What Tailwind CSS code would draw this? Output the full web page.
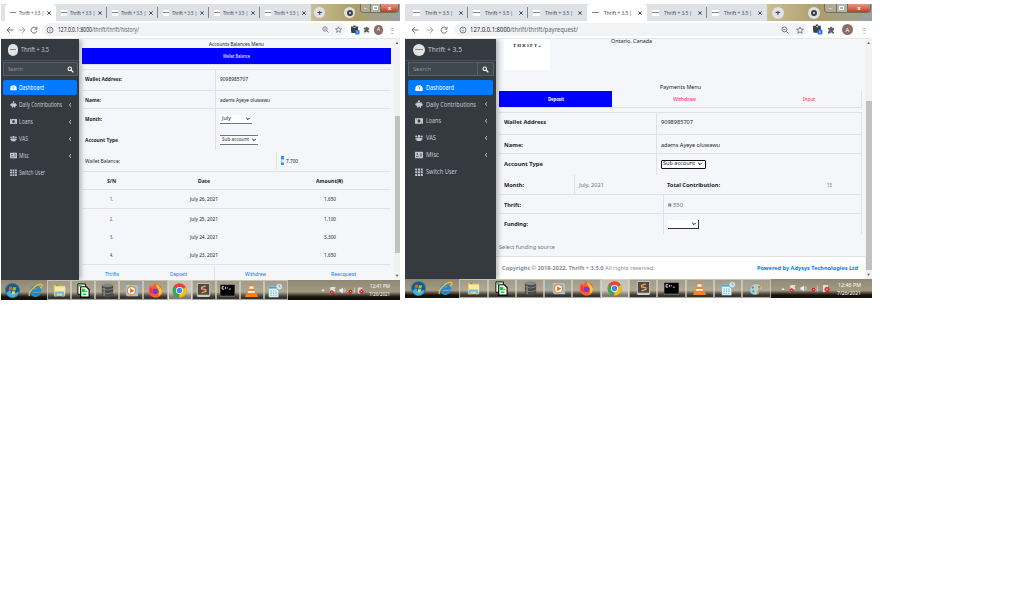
<!DOCTYPE html>
<html lang="en">
<head>
<meta charset="utf-8">
<title>Thrift + 3.5</title>
<script src="https://cdn.jsdelivr.net/npm/@tailwindcss/browser@4"></script>
</head>
<body class="bg-white w-[1024px] h-[601px] overflow-hidden font-['Noto_Sans','Open_Sans',sans-serif] text-[6px] leading-none text-[#212529]">
<svg class="hidden">
  <defs>
    <symbol id="i-back" viewBox="0 0 8 8"><path d="M7.5 4H1M4 1 1 4l3 3" fill="none" stroke="currentColor" stroke-width=".9"/></symbol>
    <symbol id="i-fwd" viewBox="0 0 8 8"><path d="M.5 4H7M4 1l3 3-3 3" fill="none" stroke="currentColor" stroke-width=".9"/></symbol>
    <symbol id="i-reload" viewBox="0 0 8 8"><path d="M6.6 2.4A3 3 0 1 0 7 5M7 .8v2.4H4.6" fill="none" stroke="currentColor" stroke-width=".9"/></symbol>
    <symbol id="i-info" viewBox="0 0 8 8"><circle cx="4" cy="4" r="3" fill="none" stroke="currentColor" stroke-width=".8"/><path d="M4 3.6v2M4 2v.8" stroke="currentColor" stroke-width=".8"/></symbol>
    <symbol id="i-zoom" viewBox="0 0 8 8"><circle cx="3.4" cy="3.4" r="2.5" fill="none" stroke="currentColor" stroke-width=".8"/><path d="m5.3 5.3 2.2 2.2M2.4 3.4h2" stroke="currentColor" stroke-width=".8"/></symbol>
    <symbol id="i-star" viewBox="0 0 8 8"><path d="m4 .9 1 2.2 2.4.2-1.8 1.6.5 2.4L4 6 1.900 7.300l.5-2.400L.6 3.300 3 3.100z" fill="none" stroke="currentColor" stroke-width=".8"/></symbol>
    <symbol id="i-ext" viewBox="0 0 10 10"><path d="M1 1.500h2.500V.5h2v1H8V8H1.500L1 6z" fill="#3c4043"/><path d="M3.500 2.500h2" stroke="#fff" stroke-width=".7"/><rect x="5" y="5" width="4.500" height="4.500" rx="1" fill="#1a73e8"/><path d="M7.200 6v2.500" stroke="#fff" stroke-width=".7"/></symbol>
    <symbol id="i-puzzle" viewBox="0 0 8 8"><path d="M1 2h2a1.200 1.200 0 0 1 2.400 0H7v2a1 1 0 0 0 0 2v1.500H5.200a1 1 0 0 0-2 0H1V5.600a1 1 0 0 0 0-2z" fill="#5f6368"/></symbol>
    <symbol id="i-search" viewBox="0 0 8 8"><circle cx="3.200" cy="3.200" r="2" fill="none" stroke="#fff" stroke-width="1.200"/><path d="m4.800 4.800 2.500 2.500" stroke="#fff" stroke-width="1.400"/></symbol>
    <symbol id="n-dash" viewBox="0 0 8 8"><path d="M.3 7V5A3.700 3.700 0 0 1 7.700 5v2z" fill="#fff"/><path d="M4 5.500 5 3M2 4h.7M3 2.600h.6" stroke="#007bff" stroke-width=".7"/></symbol>
    <symbol id="n-pig" viewBox="0 0 8 8"><circle cx="4" cy="1.200" r="1" fill="#c2c7d0"/><path d="M1 3.500 2 2.500h3.500L6.500 2v1.200l1.200.8v1.500l-1 .3-.7 1V7.700H5V6.700H3.300v1H2.200V6.500L1.200 5.500.3 5V3.700z" fill="#c2c7d0"/></symbol>
    <symbol id="n-bill" viewBox="0 0 8 8"><path d="M0 1.200h8v5.600H0z" fill="#c2c7d0"/><ellipse cx="4" cy="4" rx="1.400" ry="1.800" fill="#343a40"/><path d="M1 2.200h.8M6.200 5.800H7" stroke="#343a40" stroke-width=".6"/></symbol>
    <symbol id="n-users" viewBox="0 0 8 8"><circle cx="4" cy="2.400" r="1.400" fill="#c2c7d0"/><circle cx="1.200" cy="2.600" r="1" fill="#c2c7d0"/><circle cx="6.800" cy="2.600" r="1" fill="#c2c7d0"/><path d="M0 5.300q0-1.200 2-1.200h4q2 0 2 1.200H6.500V7h-5V5.300z" fill="#c2c7d0"/></symbol>
    <symbol id="n-card" viewBox="0 0 8 8"><rect y=".8" width="8" height="6.400" rx=".6" fill="#c2c7d0"/><circle cx="2.300" cy="3" r=".8" fill="#343a40"/><path d="M1 5.500h2.700M4.800 3H7M4.800 4.800H7" stroke="#343a40" stroke-width=".7"/></symbol>
    <symbol id="n-grid" viewBox="0 0 8 8"><path d="M.2.5h2v2h-2zM3 .5h2v2H3zM5.800.5h2v2h-2zM.2 3.200h2v2h-2zM3 3.200h2v2H3zM5.800 3.200h2v2h-2zM.2 5.900h2v2h-2zM3 5.900h2v2H3zM5.800 5.900h2v2h-2z" fill="#c2c7d0"/></symbol>

    <symbol id="t-start" viewBox="0 0 16 16"><circle cx="8" cy="8" r="7.800" fill="#175a86"/><path d="M1.500 9a6.500 6.500 0 0 0 13 0Q8 13 1.500 9" fill="#39b5e0"/><circle cx="8" cy="8" r="7.500" fill="none" stroke="#4a86a8" stroke-width=".7"/><path d="M4.500 4.200q2-1 3.200 0L7 7.500q-1.500-.8-3.200 0z" fill="#e8602c"/><path d="M8.500 4.300q1.700 1 3.500 0l-.8 3.400q-1.700.8-3.300 0z" fill="#8fc540"/><path d="M3.600 8.300q1.600-.8 3.200 0L6 11.400q-1.500-.7-3 0z" fill="#3fa9f0"/><path d="M7.700 8.500q1.600.9 3.300 0l-.8 3.200q-1.600.8-3.200 0z" fill="#fdd13a"/></symbol>
    <symbol id="t-ie" viewBox="0 0 16 16"><path d="M12.500 10.500A4.700 4.700 0 1 1 12.700 8H4" fill="none" stroke="#1b8be0" stroke-width="2.600"/><path d="M1.500 14Q0 10 6 5t8.500-3.500Q16 3 13 5.500" fill="none" stroke="#f2c230" stroke-width="1.300"/></symbol>
    <symbol id="t-folder" viewBox="0 0 16 16"><path d="M2 2h5l1 1h6v11H2z" fill="#e9c765"/><path d="M3 4h11v8H3z" fill="#fbeaa2"/><path d="M4 2h3v1H4z" fill="#38b34a"/><path d="M3 14.500V10q0-1 1-1h8q1 0 1 1v4.500h-2.200V11.500H5.200v3z" fill="#6fbce8"/></symbol>
    <symbol id="t-doc" viewBox="0 0 16 16"><path d="M2 1h8v11H2z" fill="#fff" stroke="#000"/><path d="M5 4h6l3 3v8H5z" fill="#fff" stroke="#000" stroke-width="1.200"/><path d="M3 3h3M7 7h2v2H7zM10 9h2M7 12h4" stroke="#12d430" stroke-width="1.600"/></symbol>
    <symbol id="t-db" viewBox="0 0 16 16"><path d="M2 2v11.500q6 4 12 0V2z" fill="#4a4a4a"/><ellipse cx="8" cy="2.400" rx="6" ry="2" fill="#858585"/><path d="M2 6q6 3 12 0M2 10q6 3 12 0" fill="none" stroke="#999" stroke-width=".7"/><path d="M4.500 5v9" stroke="#808080" stroke-width="1.800"/></symbol>
    <symbol id="t-wmp" viewBox="0 0 16 16"><path d="M2 2h11l2 1v11H4l-2-1z" fill="#8fc8ea"/><circle cx="8" cy="8.200" r="5" fill="#f08325"/><circle cx="8" cy="8.200" r="3.800" fill="#fff"/><path d="M6.500 5.500v5.400L11 8.200z" fill="#f06a10"/></symbol>
    <symbol id="t-ff" viewBox="0 0 16 16"><path d="M1 7q0-3 2-5 .5 1.500 1.500 2Q6 1 9 0q0 2 2 3l1 1 .5-2Q15 5 15 8.500A7 7 0 0 1 1 9z" fill="#ff5a28"/><path d="M9 0q0 2 2 3 3 2 4 5.500-.5 4-4 5.500 2-5-1-8.500Q8 3 9 0" fill="#ffc72e"/><path d="M2 4q1 2 3 2.500L4 9l3 2Q4 12 2 10z" fill="#ff2d55"/><circle cx="8" cy="8.800" r="3" fill="#8136c9"/></symbol>
    <symbol id="t-chrome" viewBox="0 0 16 16"><circle cx="8" cy="8" r="7.500" fill="#34a853"/><path d="M8 8 1.600 4A7.500 7.500 0 0 1 14.700 4.600H8z" fill="#ea4335"/><path d="M8 8l6.700-3.400A7.500 7.500 0 0 1 7.600 15.500z" fill="#fbbc05"/><circle cx="8" cy="8" r="3.700" fill="#fff"/><circle cx="8" cy="8" r="2.900" fill="#4285f4"/></symbol>
    <symbol id="t-sub" viewBox="0 0 16 16"><rect x="1" y="0" width="14" height="15" rx="1.500" fill="#c9c9c9"/><rect x="2" y="1" width="12" height="11.500" fill="#484848"/><path d="M10.500 3 6 4.500v1.700l4.500 1v1.800L5.800 10.500" fill="none" stroke="#ff9d2f" stroke-width="1.500"/></symbol>
    <symbol id="t-cmd" viewBox="0 0 16 16"><path d="M0 1.500h16v12.500H0z" fill="#000" stroke="#b4b4b4" stroke-width=".6"/><path d="M4.500 4H2.200v2.500h2.300M6 4v2.500M7.500 5.200h1M9.500 6.500h2" fill="none" stroke="#fff" stroke-width=".9"/></symbol>
    <symbol id="t-vlc" viewBox="0 0 16 16"><path d="M2.500 11h11L15 15H1z" fill="#f58220"/><path d="M7 .5h2L12.500 12q-4.500 2-9 0z" fill="#f58220"/><path d="m6.200 3.500h3.600l.8 2.500H5.400zM4.700 8.500h6.600l.6 2H4.100z" fill="#f4f4f4"/></symbol>
    <symbol id="t-cal" viewBox="0 0 16 16"><path d="M1 4h10v11H1z" fill="#f3fbff" stroke="#8cc4d8" stroke-width=".6"/><path d="M1 4h10v2H1z" fill="#48a9c4"/><path d="M2.500 8.500h7M2.500 10.800h7M2.500 13h7" stroke="#55b3cd" stroke-width="1.200" stroke-dasharray="1.600 1"/><circle cx="12" cy="4" r="3.500" fill="#dce6ea" stroke="#8a9ba3" stroke-width=".8"/><path d="M12 2v2.200h1.500" stroke="#48717f" stroke-width=".6" fill="none"/></symbol>
    <symbol id="t-paint" viewBox="0 0 16 16"><path d="M1 8Q3 2 9 3q6 1 5 5-1 2-3 1.500-2 .5-1 3-1 3-5 2Q0 13 1 8" fill="#a8d4ea" stroke="#5c9cc0" stroke-width=".6"/><circle cx="4" cy="7" r="1.200" fill="#e84a3a"/><circle cx="7.500" cy="5.500" r="1.200" fill="#f6cf36"/><circle cx="4.500" cy="11" r="1.200" fill="#3cae4a"/><circle cx="11" cy="6.500" r="1.200" fill="#3b66d4"/><path d="m9 14 5-13" stroke="#e89432" stroke-width="1.700"/></symbol>
    <symbol id="y-flag" viewBox="0 0 8 9"><path d="M1.500 1v8M2 1h5l-1 2 1 2H2" stroke="#eee" fill="#ddd" stroke-width=".8"/><circle cx="3" cy="6.500" r="2.200" fill="#d81e1e"/><path d="m2.200 5.700 1.600 1.600M3.800 5.700 2.200 7.300" stroke="#fff" stroke-width=".5"/></symbol>
    <symbol id="y-vol" viewBox="0 0 8 9"><path d="M.5 3.200H2L4.500 1v7L2 6H.5z" fill="#eee"/><path d="M5.500 3q1 1.500 0 3M6.500 2q2 2.500 0 5" fill="none" stroke="#eee" stroke-width=".6"/></symbol>
    <symbol id="y-net" viewBox="0 0 8 9"><path d="M3 8V6h1v2zM5 8V4h1v4zM7 8V1h1v7z" fill="#ccc"/><circle cx="3" cy="5.800" r="2.300" fill="#d81e1e"/><path d="m2.200 5 1.600 1.600M3.800 5 2.200 6.600" stroke="#fff" stroke-width=".5"/></symbol>
    <symbol id="y-plug" viewBox="0 0 8 9"><path d="M1 1h5v3L4 8H1z" fill="#ddd"/><circle cx="5" cy="5.500" r="2.500" fill="#d81e1e"/><path d="m4 4.500 2 2M6 4.500l-2 2" stroke="#fff" stroke-width=".7"/></symbol>
    <symbol id="c-down" viewBox="0 0 6 4"><path d="m1.200.8 1.800 1.800L4.800.8" fill="none" stroke="#000"/></symbol>
  </defs>
</svg>

<main class="flex items-start pt-1">

<!-- Accounts window -->
<section class="ml-px w-[399px] shrink-0">
  <header>
    <div class="flex h-[17px] bg-[#dee1e6]">
      <div class="flex pl-1" data-tabs="6" data-active="0" data-pitch="51" data-label="25"></div>
      <div class="flex flex-1 items-center bg-linear-to-r from-[#c9bf94] via-[#ad9d69] to-[#9aa1a0] pl-[3px]">
        <span class="flex size-[11px] items-center justify-center rounded-full bg-[#dee1e6] text-[9px] font-bold text-[#3c4043]">+</span>
        <span class="ml-[19px] flex size-[11px] items-center justify-center rounded-full bg-[#dee1e6]"><i class="size-[6px] rounded-full border-2 border-[#3c4043]"></i></span>
        <div class="ml-auto mr-px flex h-[9px] w-[39px] self-start overflow-hidden rounded-b-sm border border-t-0 border-[#6e7066] text-[6px] text-white">
          <span class="flex flex-1 items-center justify-center bg-[#b1aa92]">–</span>
          <span class="flex flex-1 items-center justify-center border-x border-[#6e7066] bg-[#b5b4a9]"><i class="h-1 w-[5px] border border-white"></i></span>
          <span class="flex w-[17px] items-center justify-center bg-linear-to-b from-[#dc9a85] to-[#c13a1c] font-bold">x</span>
        </div>
      </div>
    </div>
    <div class="flex h-[18px] items-center border-b border-[#e4e6ea] bg-white text-[#5f6368]">
      <svg class="ml-[5px] size-2"><use href="#i-back"/></svg>
      <svg class="ml-1 size-2 text-[#9aa0a6]"><use href="#i-fwd"/></svg>
      <svg class="ml-1 size-2"><use href="#i-reload"/></svg>
      <div class="ml-1 flex h-[13px] w-[304px] items-center rounded-full bg-[#f1f3f4] pl-1">
        <svg class="size-2"><use href="#i-info"/></svg>
        <span class="ml-1 text-[7px]" data-w="81"><b class="font-normal text-[#202124]">127.0.0.1:8000</b>/thrift/thrift/history/</span>
        <svg class="ml-auto size-[7px]"><use href="#i-zoom"/></svg>
        <svg class="ml-1.5 mr-1 size-[7px]"><use href="#i-star"/></svg>
      </div>
      <svg class="ml-1 size-[10px]"><use href="#i-ext"/></svg>
      <svg class="ml-[3px] size-[7px]"><use href="#i-puzzle"/></svg>
      <span class="ml-1 flex h-[10px] w-[9px] items-center justify-center rounded-full bg-[#8d6e63] text-[5px] text-white">A</span>
      <span class="ml-[5px] text-[8px]">⋮</span>
    </div>
  </header>

  <div class="flex h-[241px] overflow-hidden">
    <aside class="z-10 w-[78px] shrink-0 bg-[#343a40] text-[#c2c7d0] shadow-[2px_0_5px_rgba(0,0,0,0.3)]">
      <div class="flex h-[22px] items-center border-b border-[#4b545c] pl-[7px]">
        <span class="flex h-3 w-[10px] items-center justify-center rounded-full bg-[#e3e3e3]"><i class="h-px w-1.5 bg-[#888]"></i></span>
        <span class="ml-[3px] text-[7px]" data-w="28">Thrift + 3.5</span>
      </div>
      <div class="ml-0.5 mt-px flex h-[14px] w-[75px] border border-[#56606a] bg-[#3f474e]">
        <div class="flex w-[60px] items-center pl-[4px] text-[#8e959c]"><span data-w="15">Search</span></div>
        <div class="flex flex-1 items-center justify-center"><svg class="size-[7px]"><use href="#i-search"/></svg></div>
      </div>
      <nav class="mt-1 pl-0.5 pr-[2px]" data-nav="left"></nav>
    </aside>

    <div class="w-[315px] shrink-0 bg-[#f4f6f9] pl-[3px] pr-[3px]">
      <div class="flex h-[9px] items-center justify-center"><span data-w="55">Accounts Balances Menu</span></div>
      <div class="flex h-4 items-center justify-center bg-[#0000ff] text-[5px] text-white"><span data-w="27">Wallet Balance</span></div>
      <div class="mb-1 h-px bg-[#dee2e6]"></div>
      <div class="flex h-[22px] border-y border-[#dee2e6]">
        <div class="flex w-[134px] items-center border-r border-[#dee2e6] pb-[3px] pl-[3px] font-bold"><span data-w="37">Wallet Address:</span></div>
        <div class="flex items-center pb-[3px] pl-[4px]"><span data-w="28">9098985707</span></div>
      </div>
      <div class="flex h-[18px] border-b border-[#dee2e6]">
        <div class="flex w-[134px] items-center border-r border-[#dee2e6] pl-[3px] font-bold"><span data-w="16">Name:</span></div>
        <div class="flex items-center pl-[4px]"><span data-w="50">adams Ayeye oluwawu</span></div>
      </div>
      <div class="flex h-5">
        <div class="flex w-[134px] items-center border-r border-[#dee2e6] pl-[3px] font-bold"><span data-w="17">Month:</span></div>
        <div class="flex items-center pl-[4px]"><span class="flex h-[9px] w-8 items-center justify-between border-b border-[#767676] bg-white pl-0.5 pr-px text-[5.5px]"><span data-w="9">July</span><svg class="h-1 w-1.5"><use href="#c-down"/></svg></span></div>
      </div>
      <div class="flex h-[21px]">
        <div class="flex w-[134px] items-center border-r border-[#dee2e6] pl-[3px] font-bold"><span data-w="33">Account Type</span></div>
        <div class="flex items-center pl-[4px]"><span class="flex h-[10px] w-[38px] items-center justify-between border-y border-[#767676] bg-white pl-0.5 pr-px text-[5.5px]"><span data-w="27">Sub account</span><svg class="h-1 w-1.5"><use href="#c-down"/></svg></span></div>
      </div>
      <div class="flex h-[22px] items-start border-b border-[#dee2e6] pt-0.5">
        <div class="flex h-[17px] w-[195px] items-center border-r border-[#dee2e6] pl-[3px]"><span data-w="35">Wallet Balance:</span></div>
        <div class="flex h-[17px] items-center pl-[4px]"><span class="mr-[2px] flex h-[9px] w-[3px] items-center bg-[#3390ff] text-white"><span data-w="3">₦</span></span><span data-w="12">7,700</span></div>
      </div>
      <div class="flex h-[18px] items-center border-b border-[#dee2e6] font-bold">
        <div class="flex w-[58px] justify-center"><span data-w="9">S/N</span></div>
        <div class="flex w-[128px] justify-center"><span data-w="12">Date</span></div>
        <div class="flex flex-1 justify-center"><span data-w="27">Amount(₦)</span></div>
      </div>
      <div class="flex h-[19px] items-center border-b border-[#dee2e6]">
        <div class="flex w-[58px] justify-center"><span data-w="3">1.</span></div>
        <div class="flex w-[128px] justify-center"><span data-w="28">July 26, 2021</span></div>
        <div class="flex flex-1 justify-center"><span data-w="12">1,650</span></div>
      </div>
      <div class="flex h-[19px] items-center">
        <div class="flex w-[58px] justify-center text-[#9b3838]"><span data-w="3">2.</span></div>
        <div class="flex w-[128px] justify-center"><span data-w="28">July 25, 2021</span></div>
        <div class="flex flex-1 justify-center"><span data-w="12">1,100</span></div>
      </div>
      <div class="flex h-[18px] items-center">
        <div class="flex w-[58px] justify-center"><span data-w="3">3.</span></div>
        <div class="flex w-[128px] justify-center"><span data-w="28">July 24, 2021</span></div>
        <div class="flex flex-1 justify-center"><span data-w="12">3,300</span></div>
      </div>
      <div class="flex h-[19px] items-center border-b border-[#dee2e6]">
        <div class="flex w-[58px] justify-center"><span data-w="3">4.</span></div>
        <div class="flex w-[128px] justify-center"><span data-w="28">July 23, 2021</span></div>
        <div class="flex flex-1 justify-center"><span data-w="12">1,650</span></div>
      </div>
      <div class="flex h-4 items-center pt-px text-[#007bff]">
        <div class="flex w-[60px] justify-center"><span data-w="14">Thrifts</span></div>
        <div class="flex h-full w-[73px] items-center justify-center border-r border-[#dee2e6]"><span data-w="17">Deposit</span></div>
        <div class="flex w-[81px] justify-center"><span data-w="21">Withdraw</span></div>
        <div class="flex flex-1 justify-center"><span data-w="25">Reacquest</span></div>
      </div>
    </div>
    <div class="flex w-[6px] shrink-0 flex-col items-center bg-[#f1f1f1] text-[4px] text-[#505050]">
      <span class="h-[77px] pt-[2px]">▲</span>
      <span class="h-[137px] w-[5px] bg-[#c1c1c1]"></span>
      <span class="mt-auto pb-[2px]">▼</span>
    </div>
  </div>

  <footer class="flex h-5 items-center bg-linear-to-b from-[#8e8874] from-0% via-[#a39a80] via-60% to-[#15120c] to-85%">
    <div class="flex h-full" data-task="12" data-first="22" data-pitch="24.1"></div>
    <div class="ml-auto flex items-center pr-[6px] text-white">
      <span class="mr-1 text-[4px]">▲</span>
      <svg class="mr-[3px] h-[9px] w-[7px]"><use href="#y-flag"/></svg>
      <svg class="mr-[2px] h-[9px] w-[7px]"><use href="#y-vol"/></svg>
      <svg class="mr-[2px] h-[9px] w-[7px]"><use href="#y-net"/></svg>
      <svg class="mr-[5px] h-[9px] w-[7px]"><use href="#y-plug"/></svg>
      <div class="flex flex-col items-center gap-[2px] pr-1"><span data-w="20">12:41 PM</span><span data-w="21">7/26/2021</span></div>
    </div>
  </footer>
</section>

<!-- Payments window -->
<section class="ml-[5px] w-[467px] shrink-0">
  <header>
    <div class="flex h-[17px] bg-[#dee1e6]">
      <div class="flex pl-[3px]" data-tabs="6" data-active="3" data-pitch="59.800" data-label="28"></div>
      <div class="flex flex-1 items-center bg-linear-to-r from-[#c9bf94] via-[#ad9d69] to-[#9aa1a0] pl-[5px]">
        <span class="flex size-3 items-center justify-center rounded-full bg-[#dee1e6] text-[9px] font-bold text-[#3c4043]">+</span>
        <span class="ml-[24px] flex size-3 items-center justify-center rounded-full bg-[#dee1e6]"><i class="size-[6px] rounded-full border-2 border-[#3c4043]"></i></span>
        <div class="ml-auto mr-px flex h-[9px] w-[47px] self-start overflow-hidden rounded-b-sm border border-t-0 border-[#6e7066] text-[6px] text-white">
          <span class="flex flex-1 items-center justify-center bg-[#b1aa92]">–</span>
          <span class="flex flex-1 items-center justify-center border-x border-[#6e7066] bg-[#b5b4a9]"><i class="h-1 w-[5px] border border-white"></i></span>
          <span class="flex w-[22px] items-center justify-center bg-linear-to-b from-[#dc9a85] to-[#c13a1c] font-bold">x</span>
        </div>
      </div>
    </div>
    <div class="flex h-[18px] items-center border-b border-[#e4e6ea] bg-white text-[#5f6368]">
      <svg class="ml-[6px] size-2"><use href="#i-back"/></svg>
      <svg class="ml-[7px] size-2 text-[#9aa0a6]"><use href="#i-fwd"/></svg>
      <svg class="ml-[6px] size-2"><use href="#i-reload"/></svg>
      <div class="ml-1.5 flex h-[13px] w-[354px] items-center rounded-full bg-[#f1f3f4] pl-[5px]">
        <svg class="size-2"><use href="#i-info"/></svg>
        <span class="ml-[3px] text-[7px]" data-w="108"><b class="font-normal text-[#202124]">127.0.0.1:8000</b>/thrift/thrift/payrequest/</span>
        <svg class="ml-auto size-2"><use href="#i-zoom"/></svg>
        <svg class="ml-[7px] mr-1 size-2"><use href="#i-star"/></svg>
      </div>
      <svg class="ml-1 size-[11px]"><use href="#i-ext"/></svg>
      <svg class="ml-1 size-2"><use href="#i-puzzle"/></svg>
      <span class="ml-[7px] flex size-[11px] items-center justify-center rounded-full bg-[#8d6e63] text-[6px] text-white">A</span>
      <span class="ml-[7px] text-[8px]">⋮</span>
    </div>
  </header>

  <div class="flex h-[240px] overflow-hidden">
    <aside class="z-10 w-[91px] shrink-0 bg-[#343a40] text-[#c2c7d0] shadow-[2px_0_5px_rgba(0,0,0,0.3)]">
      <div class="flex h-[22px] items-center border-b border-[#4b545c] pl-2">
        <span class="flex size-3 items-center justify-center rounded-full bg-[#e3e3e3]"><i class="h-px w-2 bg-[#888]"></i></span>
        <span class="ml-[3px] text-[7px]" data-w="34">Thrift + 3.5</span>
      </div>
      <div class="ml-[3px] mt-px flex h-[14px] w-[86px] border border-[#56606a] bg-[#3f474e]">
        <div class="flex w-[69px] items-center border-r border-[#56606a] pl-[4px] text-[#8e959c]"><span data-w="18">Search</span></div>
        <div class="flex flex-1 items-center justify-center"><svg class="size-[7px]"><use href="#i-search"/></svg></div>
      </div>
      <nav class="mt-1 pl-[3px] pr-[3px]" data-nav="right"></nav>
    </aside>

    <div class="w-[369px] shrink-0 bg-[#f4f6f9]">
      <div class="flex h-[44px] pl-2">
        <div class="flex h-[31px] w-[46px] items-start justify-center bg-white pt-1 font-['Liberation_Serif',serif] text-[5px] font-bold"><span data-w="28">T H R I F T +</span></div>
        <span class="-mt-px ml-[61px]" data-w="41">Ontario, Canada</span>
      </div>
      <div class="flex h-2 items-center pl-[164px]"><span data-w="41">Payments Menu</span></div>
      <div class="ml-[3px] flex h-[17px] w-[363px] border-b border-r border-[#dee2e6] text-[5px]">
        <div class="flex w-[113px] items-center justify-center bg-[#0000ff] font-bold text-white"><span data-w="16">Deposit</span></div>
        <div class="flex w-[145px] items-center justify-center text-[#ff2060]"><span data-w="23">Withdraw</span></div>
        <div class="flex flex-1 items-center justify-center text-[#ff2030]"><span data-w="12">Input</span></div>
      </div>
      <div class="ml-[3px] mt-1 w-[363px]">
        <div class="flex h-[23px] border border-l-0 border-[#dee2e6]">
          <div class="flex w-[158px] items-center border-r border-[#dee2e6] pb-[3px] pl-[5px] font-bold"><span data-w="42">Wallet Address</span></div>
          <div class="flex items-center pb-[3px] pl-[4px]"><span data-w="32">9098985707</span></div>
        </div>
        <div class="flex h-[19px] border-b border-r border-[#dee2e6]">
          <div class="flex w-[158px] items-center border-r border-[#dee2e6] pl-[5px] pt-px font-bold"><span data-w="19">Name:</span></div>
          <div class="flex items-center pl-[4px] pt-px"><span data-w="59">adams Ayeye oluwawu</span></div>
        </div>
        <div class="flex h-[21px] border-r border-[#dee2e6]">
          <div class="flex w-[158px] items-center border-r border-[#dee2e6] pb-px pl-[5px] font-bold"><span data-w="39">Account Type</span></div>
          <div class="flex items-center pb-px pl-[4px]"><span class="flex h-[9px] w-[45px] items-center justify-between rounded-[1px] border border-[#101010] bg-white pl-px pr-0.5 text-[5.500px]"><span data-w="32">Sub account</span><svg class="h-1 w-1.5"><use href="#c-down"/></svg></span></div>
        </div>
        <div class="flex h-5 border-b border-r border-[#dee2e6]">
          <div class="flex w-[76px] items-center border-r border-[#dee2e6] pl-[5px] font-bold"><span data-w="20">Month:</span></div>
          <div class="flex w-[92px] items-center pl-[4px] text-[#6c757d]"><span data-w="25">July, 2021</span></div>
          <div class="flex w-[160px] items-center font-bold"><span data-w="53">Total Contribution:</span></div>
          <div class="flex items-center text-[#6c757d]"><span data-w="5">15</span></div>
        </div>
        <div class="flex h-[19px] border-b border-r border-[#dee2e6]">
          <div class="flex w-[165px] items-center border-r border-[#dee2e6] pl-[5px] pt-0.5 font-bold"><span data-w="17">Thrift:</span></div>
          <div class="flex items-center pl-[4px] pt-0.5 text-[#6c757d]"><span data-w="15">₦ 550</span></div>
        </div>
        <div class="flex h-5 border-r border-[#dee2e6]">
          <div class="flex w-[165px] items-center border-r border-[#dee2e6] pl-[5px] font-bold"><span data-w="24">Funding:</span></div>
          <div class="flex items-center pl-[4px]"><span class="flex h-[9px] w-[31px] items-center justify-end border-b border-r border-[#333] bg-white pr-px"><svg class="h-1 w-1.5"><use href="#c-down"/></svg></span></div>
        </div>
      </div>
      <div class="flex h-[22px] items-center pl-[3px] pt-[3px] text-[#6c757d]"><span data-w="56">Select funding source</span></div>
      <div class="flex h-6 items-center justify-between border-t border-[#dee2e6] bg-white pl-[6px] pr-[7px] text-[5.500px] font-bold text-[#869099]">
        <span data-w="153">Copyright © 2018-2022. Thrift + 3.5.0 <span class="font-normal">All rights reserved.</span></span>
        <span class="text-[#007bff]" data-w="101">Powered by Adysys Technologies Ltd</span>
      </div>
    </div>
    <div class="flex w-[7px] shrink-0 flex-col items-center bg-[#f1f1f1] text-[4px] text-[#505050]">
      <span class="h-[62px] pt-[2px]">▲</span>
      <span class="h-[169px] w-[6px] bg-[#c1c1c1]"></span>
      <span class="mt-auto pb-[2px]">▼</span>
    </div>
  </div>

  <footer class="flex h-[19px] items-center bg-linear-to-b from-[#8e8874] from-0% via-[#a39a80] via-60% to-[#15120c] to-85%">
    <div class="flex h-full" data-task="13" data-first="26" data-pitch="28.300"></div>
    <div class="ml-auto flex items-center pr-[7px] text-white">
      <span class="mr-1 text-[4px]">▲</span>
      <svg class="mr-[4px] h-[9px] w-[7px]"><use href="#y-flag"/></svg>
      <svg class="mr-[4px] h-[9px] w-[7px]"><use href="#y-vol"/></svg>
      <svg class="mr-[4px] h-[9px] w-[7px]"><use href="#y-net"/></svg>
      <svg class="mr-[7px] h-[9px] w-[8px]"><use href="#y-plug"/></svg>
      <div class="flex flex-col items-center gap-[2px] pr-[4px]"><span data-w="23">12:46 PM</span><span data-w="24">7/26/2021</span></div>
    </div>
  </footer>
</section>
</main>

<script>
// Browser tabs
document.querySelectorAll('[data-tabs]').forEach(el => {
  const d = el.dataset;
  const active = +d.active;
  const wide = +d.pitch > 55;
  const icon = wide ? 'flex h-[6px] w-[7px] shrink-0 items-center bg-white' : 'flex size-[6px] shrink-0 items-center bg-white';
  const label = wide ? 'ml-[5px] text-[6px]' : 'ml-[3px] text-[6px]';
  for (let i = 0; i < +d.tabs; i++) {
    const skin = i === active ? 'rounded-t-sm bg-white' : '';
    const line = i === active || i + 1 === active || i + 1 === +d.tabs ? '<i class="w-px"></i>' : '<i class="h-[11px] w-px bg-[#80858c]"></i>';
    el.insertAdjacentHTML('beforeend',
      `<div class="flex items-center pl-[5px] text-[#45494d] ${skin}" style="width:${d.pitch}px">
        <i class="${icon}"><i class="h-px w-full bg-[#888]"></i></i>
        <span class="${label}" data-w="${d.label}">Thrift + 3.5 |</span>
        <svg class="ml-auto mr-[4px] size-[4px] shrink-0" viewBox="0 0 4 4"><path d="m.3.3 3.400 3.400M3.700.3.300 3.700" stroke="#3c4043" stroke-width=".9"/></svg>${line}
      </div>`);
  }
});

// Sidebar menus: icon, label, left width, right width, has submenu
const menu = [
  ['n-dash', 'Dashboard', 25, 28, false],
  ['n-pig', 'Daily Contributions', 43, 50, true],
  ['n-bill', 'Loans', 14, 15, true],
  ['n-users', 'VAS', 9, 10, true],
  ['n-card', 'Misc', 10, 13, true],
  ['n-grid', 'Switch User', 26, 31, false]
];
document.querySelectorAll('[data-nav]').forEach(el => {
  const right = el.dataset.nav === 'right';
  menu.forEach(([icon, label, lw, rw, sub], i) => {
    const row = right ? 'h-[16.800px]' : 'h-[17px]';
    const skin = i === 0 ? 'rounded-[2px] bg-[#007bff] text-white h-[15px] mb-px' : row;
    const size = right ? 'size-2' : 'size-[7px]';
    const gap = right ? 'pl-[7px] gap-[3px]' : 'pl-[7px] gap-[2px]';
    const arrow = sub ? '<svg class="ml-auto mr-[6px] h-[4px] w-[2px]" viewBox="0 0 2 4"><path d="M1.800.2.500 2l1.300 1.800" fill="none" stroke="#c2c7d0"/></svg>' : '';
    el.insertAdjacentHTML('beforeend',
      `<a class="flex items-center ${gap} ${skin}"><svg class="${size}"><use href="#${icon}"/></svg><span class="pt-px text-[6.500px]" data-w="${right ? rw : lw}">${label}</span>${arrow}</a>`);
  });
});

// Taskbar buttons
const apps = ['start', 'ie', 'folder', 'doc', 'db', 'wmp', 'ff', 'chrome', 'sub', 'cmd', 'vlc', 'cal', 'paint'];
document.querySelectorAll('[data-task]').forEach(el => {
  const d = el.dataset;
  apps.slice(0, +d.task).forEach((a, i) => {
    const skin = i < 2 ? '' : a === 'chrome' ? 'border border-[#d6d2c4] bg-white/45' : 'border border-[#d6d2c4]/70 bg-white/15';
    el.insertAdjacentHTML('beforeend',
      `<span class="flex h-full items-center justify-center ${skin}" style="width:${i === 0 ? d.first : d.pitch}px"><svg class="size-[15px]"><use href="#t-${a}"/></svg></span>`);
  });
});

const fitter = new ResizeObserver(entries => entries.forEach(({ target, contentRect }) => {
  if (contentRect.width) target.style.transform = `scaleX(${target.parentElement.dataset.w / contentRect.width})`;
}));
document.querySelectorAll('[data-w]').forEach(el => {
  const inner = document.createElement('span');
  inner.className = 'inline-block origin-left whitespace-nowrap';
  while (el.firstChild) inner.appendChild(el.firstChild);
  el.classList.add('block', 'shrink-0', 'whitespace-nowrap');
  el.style.width = el.dataset.w + 'px';
  el.appendChild(inner);
  fitter.observe(inner);
});
</script>
</body>
</html>
